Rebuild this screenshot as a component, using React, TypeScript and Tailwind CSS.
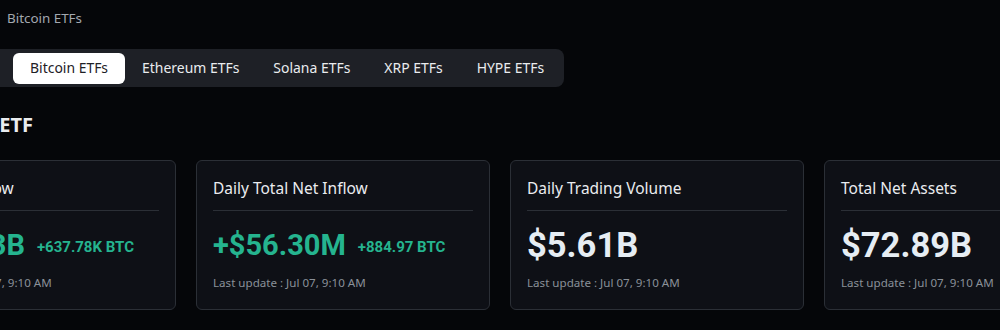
import React from "react";

const tabs = ["Bitcoin ETFs", "Ethereum ETFs", "Solana ETFs", "XRP ETFs", "HYPE ETFs"];

type Card = { title: string; value: string; green?: boolean; sub?: string };

const cards: Card[] = [
  { title: "Total Net Inflow", value: "+$49.63B", green: true, sub: "+637.78K BTC" },
  { title: "Daily Total Net Inflow", value: "+$56.30M", green: true, sub: "+884.97 BTC" },
  { title: "Daily Trading Volume", value: "$5.61B" },
  { title: "Total Net Assets", value: "$72.89B" },
];

export default function App() {
  return (
    <div className="w-[1000px] h-[330px] overflow-hidden bg-[#050609] font-['Noto_Sans',sans-serif]">
      <div className="ml-[-118px] pt-[8px] w-[1300px]">
        {/* breadcrumb */}
        <div className="flex items-center h-[20px] text-[13.4px] text-[#a3a8b0]">
          <div className="w-[118px] flex justify-end items-center gap-[6px]">
            <span>ETFs</span>
            <svg width="6" height="10" viewBox="0 0 6 10" fill="none" stroke="#6b717a" strokeWidth="1.2">
              <path d="M1 1l4 4-4 4" />
            </svg>
          </div>
          <span className="ml-[7px]">Bitcoin ETFs</span>
        </div>

        {/* tabs */}
        <div className="mt-[21px] inline-flex items-center h-[38px] p-[3px] rounded-[8px] bg-[#1e2026] text-[13.95px]">
          <div className="w-[128px] h-[31px] flex items-center justify-center text-[#eaecef]">Overview</div>
          {tabs.map((t, i) => (
            <div
              key={t}
              className={
                i === 0
                  ? "h-[31px] px-[17px] flex items-center rounded-[6px] bg-white text-[#1e2026]"
                  : "h-[31px] px-[17px] flex items-center text-[#eaecef]"
              }
            >
              {t}
            </div>
          ))}
        </div>

        {/* heading */}
        <div className="mt-[24px] h-[28px] flex items-center">
          <div className="w-[151px] flex justify-end text-[20px] font-bold text-[#eaecef] whitespace-nowrap">
            Bitcoin Spot ETF
          </div>
        </div>

        {/* cards */}
        <div className="mt-[21px] flex gap-[20px]">
          {cards.map((c) => (
            <div
              key={c.title}
              className="w-[294px] shrink-0 h-[150px] rounded-[6px] border border-[#2b2f36] bg-[#0e1016] px-[16px] pt-[15px]"
            >
              <div className="text-[15.5px] leading-[24px] text-[#eaecef] whitespace-nowrap">{c.title}</div>
              <div className="mt-[10px] h-px bg-[#2b2f36]" />
              <div className="mt-[15px] h-[40px] flex items-center gap-[12px] whitespace-nowrap font-['Roboto',sans-serif]">
                {c.green ? (
                  <span className="text-[29px] font-bold text-[#25b48f]">{c.value}</span>
                ) : (
                  <span className="text-[34.5px] font-bold text-[#e6edf3]">{c.value}</span>
                )}
                {c.sub && <span className="text-[15px] font-bold text-[#25b48f] pt-[3px]">{c.sub}</span>}
              </div>
              <div className="mt-[9px] text-[11.6px] leading-[16px] text-[#8a9099] whitespace-nowrap">
                Last update : Jul 07, 9:10 AM
              </div>
            </div>
          ))}
        </div>
      </div>
    </div>
  );
}
